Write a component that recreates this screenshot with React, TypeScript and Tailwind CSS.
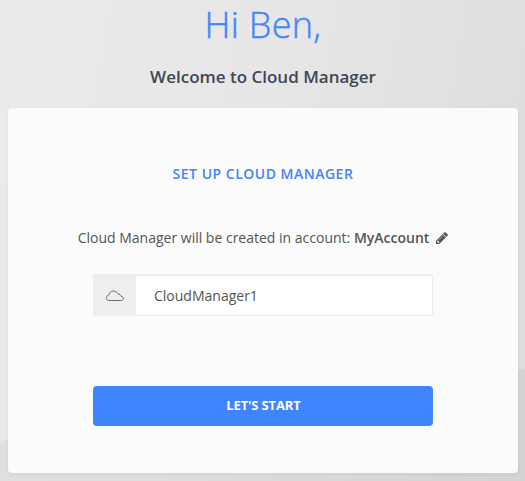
import React from "react";

function CloudIcon() {
  return (
    <svg width="20" height="14" viewBox="0 0 20 14" fill="none" stroke="#707070" strokeWidth="1">
      <path d="M4 11.500h12.200c1.400 0 2.200-.9 2.200-2 0-1.200-.9-2-2.400-2.300-.5-1.400-1.300-2.100-2.800-2C12.200 3.200 10.600 2 8.500 2 6 2 4.300 3.500 4.200 5.800 2.500 6.200 1.500 7.200 1.500 8.800c0 1.600 1 2.700 2.500 2.700z" />
    </svg>
  );
}

function PencilIcon() {
  return (
    <svg width="12" height="12" viewBox="0 0 1536 1536" fill="#555">
      <path d="M363 1408l91-91-235-235-91 91v107h128v128h107zM886 480q0-22-22-22-10 0-17 7l-542 542q-7 7-7 17 0 22 22 22 10 0 17-7l542-542q7-7 7-17zM832 288l416 416-832 832H0v-416zM1515 384q0 53-37 90l-166 166-416-416 166-165q36-38 90-38 53 0 91 38l235 234q37 39 37 91z" />
    </svg>
  );
}

export default function App() {
  return (
    <div className="h-[481px] w-[525px] overflow-hidden bg-[linear-gradient(172.2deg,transparent_437px,rgba(0,0,0,0.045)_437px),linear-gradient(100deg,#ebebeb_0%,#e6e6e6_50%,#dcdcdc_100%)] px-2 font-['Open_Sans','Noto_Sans',sans-serif] text-[#555]">
      <header className="flex h-[108px] flex-col items-center">
        <h1 className="mt-[1px] h-12 pl-px text-[36px] leading-[48px] font-light tracking-[0.3px] text-[#3f85ff] [-webkit-text-stroke:0.4px_#3f85ff]">Hi Ben,</h1>
        <h2 className="mt-4 pl-px text-[17px] leading-6 font-semibold text-[#404654]">Welcome to Cloud Manager</h2>
      </header>
      <main className="flex h-[365px] w-[510px] flex-col items-center rounded bg-[#fbfbfb] shadow-[0_1px_4px_rgba(0,0,0,0.06)]">
        <h3 className="mt-[56px] text-sm leading-5 font-semibold tracking-[0.5px] text-[#4582fb]">SET UP CLOUD MANAGER</h3>
        <p className="mt-11 flex items-center text-sm leading-5 whitespace-pre">
          Cloud Manager will be created in account: <span className="mr-[7px] font-semibold">MyAccount</span>
          <PencilIcon />
        </p>
        <div className="mt-[26px] flex h-[42px] w-[340px] border border-t-2 border-[#ededed] bg-white">
          <div className="flex w-[42px] items-center justify-center bg-[#eee]">
            <CloudIcon />
          </div>
          <div className="flex items-center pl-[18px] text-sm">CloudManager1</div>
        </div>
        <button className="mt-[70px] h-10 w-[340px] rounded bg-[#3f85ff] pl-px text-[13px] font-bold tracking-[-0.15px] text-white">LET'S START</button>
      </main>
    </div>
  );
}
